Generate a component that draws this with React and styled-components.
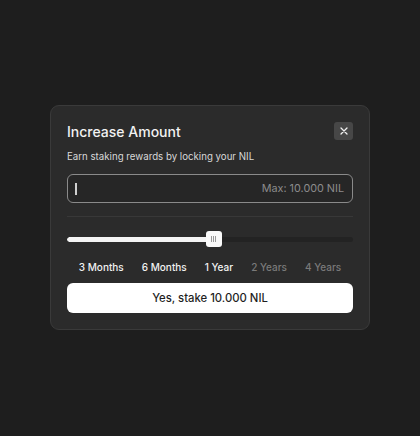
import React from "react";
import styled, { createGlobalStyle } from "styled-components";

const GlobalStyle = createGlobalStyle`
  html, body {
    margin: 0;
    padding: 0;
    background: #1e1e1e;
    font-family: Inter, "Noto Sans", sans-serif;
  }
  * { box-sizing: border-box; }
`;

const Page = styled.div`
  width: 420px;
  height: 436px;
  display: flex;
  justify-content: center;
  padding-top: 105px;
`;

const Card = styled.div`
  width: 320px;
  height: 225px;
  background: #2b2b2b;
  border: 1px solid #3a3a3a;
  border-radius: 9px;
  padding: 16px 16px 0;
  display: flex;
  flex-direction: column;
`;

const Header = styled.div`
  height: 18px;
  display: flex;
  align-items: center;
  justify-content: space-between;
`;

const Title = styled.h2`
  margin: 0;
  font-size: 14px;
  font-weight: 500;
  color: #f2f2f2;
`;

const CloseButton = styled.button`
  width: 19px;
  height: 18px;
  border: none;
  border-radius: 3px;
  background: #474747;
  padding: 0;
  display: flex;
  align-items: center;
  justify-content: center;
`;

const Subtitle = styled.p`
  margin: 9px 0 0;
  font-size: 9.7px;
  line-height: 16px;
  color: #d8d8d8;
`;

const InputBox = styled.div`
  margin-top: 9px;
  height: 29px;
  border: 1px solid #8a8a8a;
  border-radius: 6px;
  background: #262626;
  display: flex;
  align-items: center;
  justify-content: space-between;
  padding: 0 8px 0 7px;
`;

const Caret = styled.span`
  width: 2px;
  height: 12px;
  background: #d0d0d0;
`;

const MaxLabel = styled.span`
  font-size: 10.8px;
  color: #8c8c8c;
`;

const Divider = styled.div`
  margin-top: 13px;
  height: 1px;
  background: #383838;
`;

const Slider = styled.div`
  margin-top: 14px;
  height: 16px;
  position: relative;
  display: flex;
  align-items: center;
`;

const Track = styled.div`
  width: 100%;
  height: 5px;
  border-radius: 3px;
  background: #232323;
  overflow: hidden;
`;

const Fill = styled.div`
  height: 100%;
  background: #f4f4f4;
  border-radius: 3px;
`;

const Thumb = styled.div`
  position: absolute;
  top: 0;
  width: 16px;
  height: 16px;
  margin-left: -8px;
  background: #fafafa;
  border-radius: 3px;
  display: flex;
  align-items: center;
  justify-content: center;
  gap: 1px;
`;

const Grip = styled.span`
  width: 1px;
  height: 6px;
  background: #9a9a9a;
`;

const Periods = styled.div`
  margin-top: 12px;
  height: 16px;
  display: flex;
  justify-content: center;
  gap: 18px;
`;

const Period = styled.span`
  font-size: 10px;
  line-height: 16px;
  font-weight: 500;
  white-space: nowrap;
  color: ${(p) => (p.$active ? "#f2f2f2" : "#7a7a7a")};
`;

const StakeButton = styled.button`
  margin-top: 8px;
  height: 30px;
  border: none;
  border-radius: 6px;
  background: #ffffff;
  color: #1f1f1f;
  font-family: inherit;
  font-size: 11.3px;
  font-weight: 500;
`;

const periods = [
  { label: "3 Months", active: true },
  { label: "6 Months", active: true },
  { label: "1 Year", active: true },
  { label: "2 Years", active: false },
  { label: "4 Years", active: false },
];

const value = 51.3;

export default function App() {
  return (
    <>
      <GlobalStyle />
      <Page>
        <Card>
          <Header>
            <Title>Increase Amount</Title>
            <CloseButton aria-label="Close">
              <svg width="8" height="8" viewBox="0 0 8 8">
                <path d="M1 1L7 7M7 1L1 7" stroke="#f0f0f0" strokeWidth="1.3" strokeLinecap="round" />
              </svg>
            </CloseButton>
          </Header>
          <Subtitle>Earn staking rewards by locking your NIL</Subtitle>
          <InputBox>
            <Caret />
            <MaxLabel>Max: 10.000 NIL</MaxLabel>
          </InputBox>
          <Divider />
          <Slider>
            <Track>
              <Fill style={{ width: `${value}%` }} />
            </Track>
            <Thumb style={{ left: `${value}%` }}>
              <Grip />
              <Grip />
              <Grip />
            </Thumb>
          </Slider>
          <Periods>
            {periods.map((p) => (
              <Period key={p.label} $active={p.active}>
                {p.label}
              </Period>
            ))}
          </Periods>
          <StakeButton>Yes, stake 10.000 NIL</StakeButton>
        </Card>
      </Page>
    </>
  );
}
